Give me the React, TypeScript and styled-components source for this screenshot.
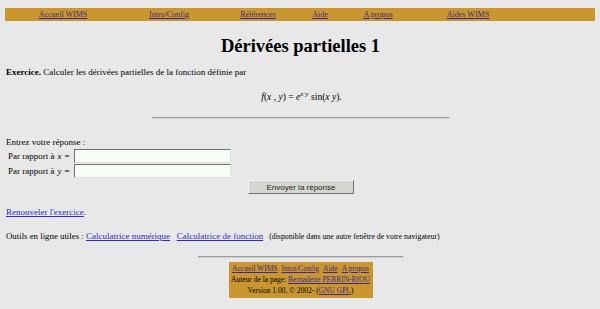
import React from "react";
import styled, { createGlobalStyle } from "styled-components";

const Global = createGlobalStyle`
  html, body { margin: 0; padding: 0; background: #e8e8e8; }
  body { font-family: "Liberation Serif", "Times New Roman", serif; color: #000; font-size: 9px; }
`;

const Page = styled.div`
  padding: 8px 5px 0 6px;
  display: flex;
  flex-direction: column;
`;

const MenuBar = styled.nav`
  background: #c99630;
  height: 13px;
  display: grid;
  grid-template-columns: 116px 96px 82px 42px 74px 106px;
  align-items: center;
  justify-items: center;
  margin-left: -1px;
`;

const Link = styled.a<{ $tone?: "bar" | "main" }>`
  color: ${(p) => (p.$tone === "bar" ? "#3b2a8e" : "#2a2acc")};
  text-decoration: underline;
  cursor: pointer;
  font-size: ${(p) => (p.$tone === "bar" ? "8px" : "9px")};
`;

const Title = styled.h1`
  margin: 14px 0 0;
  text-align: center;
  font-size: 18.5px;
  font-weight: bold;
  line-height: 22px;
`;

const Para = styled.p<{ $mt?: number; $size?: number }>`
  margin: ${(p) => p.$mt ?? 0}px 0 0;
  font-size: ${(p) => p.$size ?? 9}px;
  line-height: 11px;
`;

const Formula = styled.div`
  margin-top: 14px;
  text-align: center;
  font-size: 9.5px;
  line-height: 11px;
  padding-left: 2px;
  i { font-style: italic; }
  sup { font-size: 7px; vertical-align: 4px; line-height: 0; }
`;

const Rule = styled.hr<{ $w: number; $mt: number }>`
  width: ${(p) => p.$w}px;
  margin: ${(p) => p.$mt}px auto 0;
  border: none;
  border-top: 1px solid #9a9a9a;
  border-bottom: 1px solid #cfcfcf;
  height: 0;
`;

const AnswerBlock = styled.div`
  margin-top: 18px;
  display: flex;
  flex-direction: column;
`;

const AnswerRow = styled.label`
  display: flex;
  align-items: center;
  height: 14px;
  margin-top: 1px;
  padding-left: 2px;
  font-size: 9px;
  i { font-style: italic; margin: 0 3px; }
`;

const Field = styled.input`
  box-sizing: border-box;
  width: 157px;
  height: 14px;
  margin-left: 4px;
  background: #f6fcf6;
  border: 1px solid;
  border-color: #707070 #e0e0e0 #e0e0e0 #707070;
  padding: 0 2px;
  font-size: 9px;
`;

const ButtonRow = styled.div`
  display: flex;
  justify-content: center;
  margin-top: 2px;
  padding-left: 1px;
`;

const Button = styled.button`
  box-sizing: border-box;
  width: 106px;
  height: 14px;
  background: #d6d6d0;
  border: 1px solid;
  border-color: #f4f4f4 #707070 #707070 #f4f4f4;
  font-family: "Liberation Sans", Arial, sans-serif;
  font-size: 8px;
  color: #222;
  padding: 0;
`;

const Small = styled.span`
  font-size: 7.8px;
  margin-left: 6px;
`;

const Footer = styled.div`
  align-self: center;
  margin-top: 4px;
  width: 144px;
  background: #c99630;
  padding: 1px 0 2px;
  display: flex;
  flex-direction: column;
  align-items: center;
  white-space: nowrap;
  font-size: 7.5px;
  line-height: 11px;
  a { font-size: 7.5px; }
`;

const FooterLinks = styled.div`
  display: flex;
  gap: 4px;
`;

export default function App() {
  return (
    <>
      <Global />
      <Page>
        <MenuBar>
          <Link $tone="bar">Accueil WIMS</Link>
          <Link $tone="bar">Intro/Config</Link>
          <Link $tone="bar">Références</Link>
          <Link $tone="bar">Aide</Link>
          <Link $tone="bar">A propos</Link>
          <Link $tone="bar">Aides WIMS</Link>
        </MenuBar>
        <Title>Dérivées partielles 1</Title>
        <Para $mt={10}>
          <b>Exercice.</b> Calculer les dérivées partielles de la fonction définie par
        </Para>
        <Formula>
          <i>f</i>(<i>x</i> , <i>y</i>) = <i>e</i>
          <sup>
            <i>x</i>·<i>y</i>
          </sup>{" "}
          sin(<i>x</i> <i>y</i>).
        </Formula>
        <Rule $w={297} $mt={14} />
        <AnswerBlock>
          <Para>Entrez votre réponse :</Para>
          <AnswerRow>
            Par rapport à <i>x</i> = <Field />
          </AnswerRow>
          <AnswerRow>
            Par rapport à <i>y</i> = <Field />
          </AnswerRow>
          <ButtonRow>
            <Button>Envoyer la réponse</Button>
          </ButtonRow>
        </AnswerBlock>
        <Para $mt={13}>
          <Link>Renouveler l'exercice</Link>.
        </Para>
        <Para $mt={13} $size={8.8}>
          Outils en ligne utiles : <Link>Calculatrice numérique</Link>
          &nbsp;&nbsp; <Link>Calculatrice de fonction</Link>
          <Small>(disponible dans une autre fenêtre de votre navigateur)</Small>
        </Para>
        <Rule $w={205} $mt={14} />
        <Footer>
          <FooterLinks>
            <Link $tone="bar">Accueil WIMS</Link>
            <Link $tone="bar">Intro/Config</Link>
            <Link $tone="bar">Aide</Link>
            <Link $tone="bar">A propos</Link>
          </FooterLinks>
          <div>
            Auteur de la page: <Link $tone="bar">Bernadette PERRIN-RIOU</Link>
          </div>
          <div>
            Version 1.00, © 2002- (<Link $tone="bar">GNU GPL</Link>)
          </div>
        </Footer>
      </Page>
    </>
  );
}
